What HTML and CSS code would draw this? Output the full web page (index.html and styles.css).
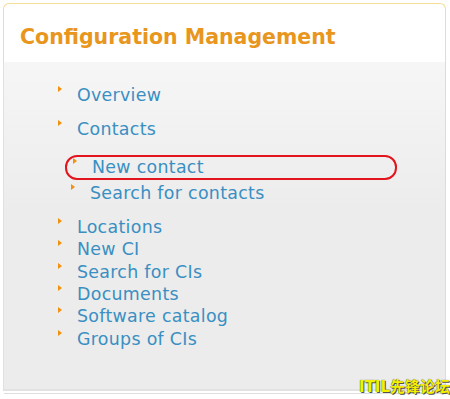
FILE: index.html
```html
<!DOCTYPE html>
<html>
<head>
<meta charset="utf-8">
<link rel="stylesheet" href="styles.css">
</head>
<body>
<div class="panel">
  <div class="panel-head">
    <h1 class="title">Configuration Management</h1>
  </div>
  <div class="panel-body">
    <ul class="menu">
      <li class="item gap-after"><span class="bullet"></span><a class="link">Overview</a></li>
      <li class="item gap-after-lg"><span class="bullet"></span><a class="link">Contacts</a></li>
      <li class="item sub first-sub"><span class="bullet"></span><a class="link">New contact</a><span class="highlight"></span></li>
      <li class="item sub sub-second gap-after"><span class="bullet"></span><a class="link">Search for contacts</a></li>
      <li class="item"><span class="bullet"></span><a class="link">Locations</a></li>
      <li class="item"><span class="bullet"></span><a class="link">New CI</a></li>
      <li class="item"><span class="bullet"></span><a class="link">Search for CIs</a></li>
      <li class="item"><span class="bullet"></span><a class="link">Documents</a></li>
      <li class="item"><span class="bullet"></span><a class="link">Software catalog</a></li>
      <li class="item"><span class="bullet"></span><a class="link">Groups of CIs</a></li>
    </ul>
  </div>
</div>
<div class="watermark">ITIL先锋论坛</div>
</body>
</html>
```
FILE: styles.css
```css
html, body {
  margin: 0;
  padding: 0;
  background: #ffffff;
  width: 450px;
  height: 399px;
  overflow: hidden;
  font-family: "DejaVu Sans", Verdana, sans-serif;
}

.panel {
  margin: 3px 3px 0 3px;
  width: 443px;
  box-sizing: border-box;
}

.panel-head {
  height: 59px;
  box-sizing: border-box;
  border: 1px solid #f4dd95;
  border-bottom: none;
  border-radius: 6px 6px 0 0;
  background: #ffffff;
  padding: 21px 0 0 16px;
}

.title {
  margin: 0;
  font-size: 20.5px;
  line-height: 24px;
  font-weight: bold;
  color: #e8961d;
}

.panel-body {
  height: 329px;
  box-sizing: border-box;
  border-left: 1px solid #e0e0e0;
  border-right: 1px solid #dcdcdc;
  border-bottom: 2px solid #e2e2e2;
  background: linear-gradient(#f6f6f6, #ececec 45%, #ececec);
  padding-top: 22px;
  box-shadow: 0 3px 0 -1px #ffffff, 0 4px 0 -1px #dedede;
}

.menu {
  list-style: none;
  margin: 0;
  padding: 0;
}

.item {
  position: relative;
  display: flex;
  align-items: flex-start;
  padding-left: 53px;
  height: 22.3px;
  line-height: 22px;
}

.gap-after { margin-bottom: 12px; }
.gap-after-lg { margin-bottom: 15px; }
.first-sub { margin-bottom: 4px; }

.sub {
  padding-left: 68px;
}

.sub-second {
  padding-left: 66px;
}

.bullet {
  width: 0;
  height: 0;
  margin-top: 2px;
  margin-left: 1px;
  margin-right: 15px;
  border-left: 4px solid #f0920f;
  border-top: 3.5px solid transparent;
  border-bottom: 3.5px solid transparent;
  flex: none;
}

.link {
  font-size: 17.4px;
  letter-spacing: 0.3px;
  color: #3a8fc2;
  text-decoration: none;
  white-space: nowrap;
}

.highlight {
  position: absolute;
  left: 61px;
  top: -1px;
  width: 332px;
  height: 25px;
  box-sizing: border-box;
  border: 2px solid #e3141c;
  border-radius: 12px;
}

.watermark {
  position: absolute;
  right: 0;
  top: 378px;
  font-family: "DejaVu Sans", "Noto Sans CJK SC", sans-serif;
  font-size: 15px;
  font-weight: bold;
  line-height: 18px;
  color: #f4f000;
  text-shadow: 0 0 1px #333, 1px 1px 0 #555;
}
```
